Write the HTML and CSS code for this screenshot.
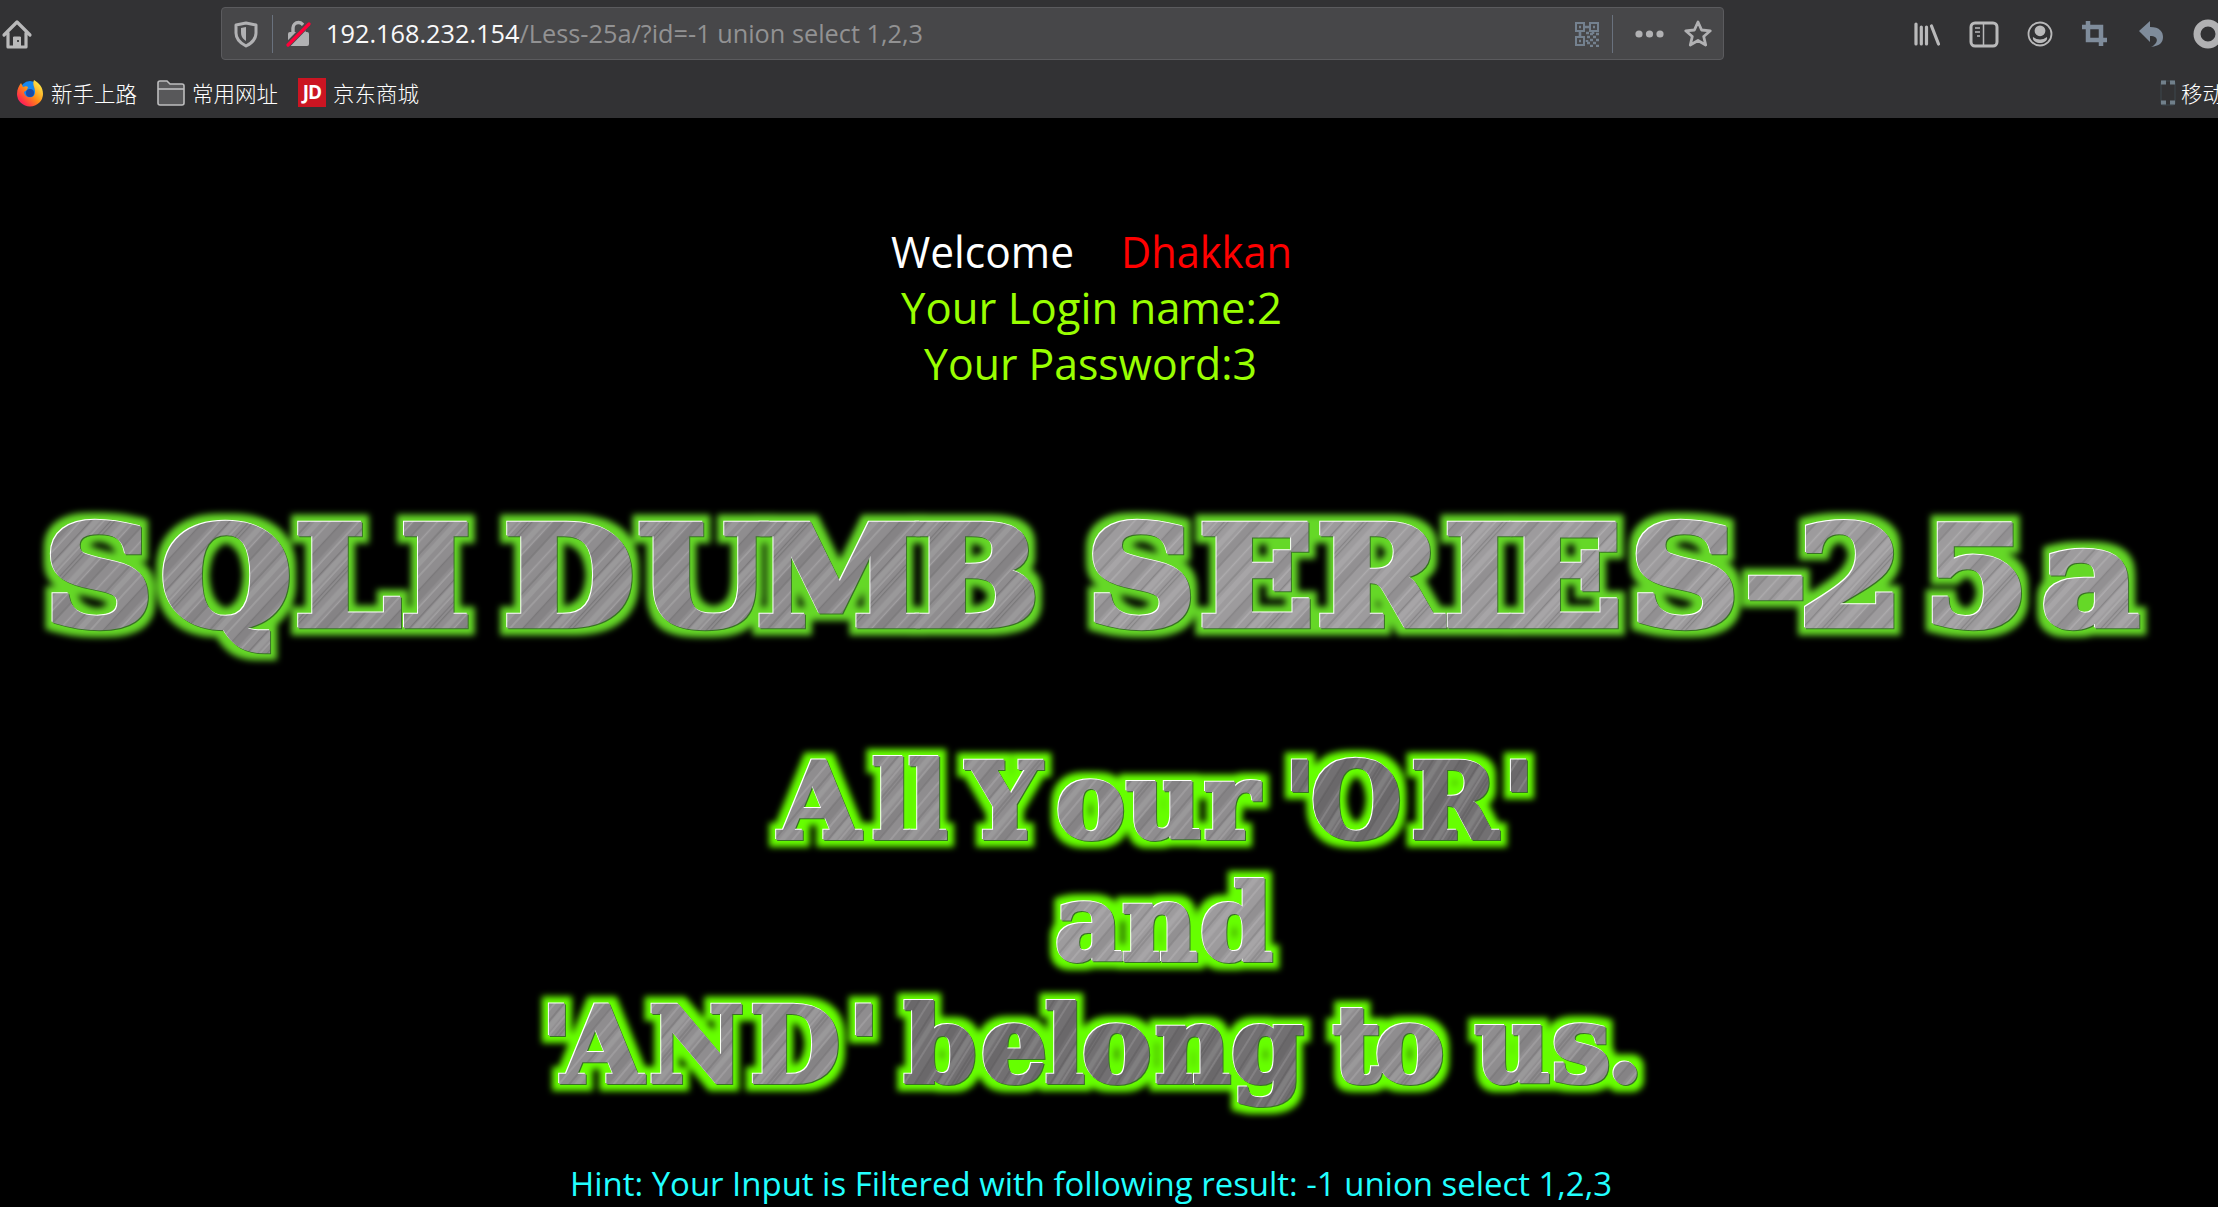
FILE: index.html
```
<!DOCTYPE html>
<html lang="zh-CN">
<head>
<meta charset="utf-8">
<title>Less-25a</title>
<link rel="stylesheet" href="styles.css">
</head>
<body>
<header class="chrome">
  <div class="toolbar">
    <svg class="home" width="32" height="32" viewBox="0 0 32 32" fill="none" stroke="#b9b9ba" stroke-width="3.2" stroke-linejoin="round" stroke-linecap="round"><path d="M3 17 16 4l13 13M7 15v14h18V15"/><path d="M12.5 29V19h7v10z" fill="#b9b9ba" stroke-width="1"/><circle cx="17" cy="23" r="1" fill="#222" stroke="none"/></svg>
    <div class="urlbar">
      <svg class="shield" width="24" height="28" viewBox="0 0 24 28"><path d="M12 3 22 5v8c0 6-4 10-10 13C6 23 2 19 2 13V5z" fill="none" stroke="#b1b1b3" stroke-width="3" stroke-linejoin="round"/><path d="M12 7v14c-4-3-5-5-5-9V8z" fill="#b1b1b3"/></svg>
      <i class="sep"></i>
      <svg class="lock" width="26" height="28" viewBox="0 0 26 28"><path d="M7 14V8a5.5 5.5 0 0 1 11 0v6" fill="none" stroke="#b1b1b3" stroke-width="3.4"/><rect x="2" y="12" width="21" height="14" rx="2" fill="#b1b1b3"/><path d="m1 25.500L23 3" stroke="#474749" stroke-width="6"/><path d="M2 25 23 4" stroke="#ff0039" stroke-width="3.2" stroke-linecap="round"/></svg>
      <svg class="url" width="620" height="50"><text x="0" y="34" textLength="597" lengthAdjust="spacingAndGlyphs"><tspan fill="#f9f9fa">192.168.232.154</tspan><tspan fill="#929293">/Less-25a/?id=-1 union select 1,2,3</tspan></text></svg>
      <svg class="qr" width="26" height="26" viewBox="0 0 26 26" fill="none" stroke="#74818f" stroke-width="2"><path d="M2 2h8v8H2zM16 2h8v8h-8zM2 16h8v8H2z"/><path d="M5 6h2M19 6h2M5 20h2M10 6h6M6 10v6M16 13h3M22 13h3M13 16h3M19 16h3M16 19h3M22 19h3M13 22h3M19 22h3M12 12h3M19 10v3M13 19v2M16 25h3M22 25h3" stroke-width="2.6"/></svg>
      <i class="sep"></i>
      <svg class="dots" width="30" height="10" viewBox="0 0 30 10" fill="#b1b1b3"><circle cx="5" cy="5" r="3.6"/><circle cx="15.500" cy="5" r="3.600"/><circle cx="26" cy="5" r="3.600"/></svg>
      <svg class="star" width="30" height="30" viewBox="0 0 30 30"><path d="m15 3 3.600 8 8.700.8-6.600 5.700 2 8.500-7.700-4.500L7.300 26l2-8.500-6.600-5.700 8.700-.8z" fill="none" stroke="#b1b1b3" stroke-width="2.800" stroke-linejoin="round"/></svg>
    </div>
    <div class="tools">
      <svg width="28" height="28" viewBox="0 0 28 28" stroke="#b9b9ba" stroke-width="3.2" stroke-linecap="round"><path d="M3 4v20M8.300 7v17M13.500 7v17M18.500 6l7 18"/></svg>
      <svg width="30" height="28" viewBox="0 0 30 28" fill="none" stroke="#b9b9ba" stroke-width="3"><rect x="2" y="3" width="26" height="23" rx="4"/><path d="M14.500 4v22" stroke-width="1.500"/><path d="M6 8h5M6 12h5M8 16h3" stroke-width="1.700"/></svg>
      <svg width="26" height="26" viewBox="0 0 26 26" fill="#b9b9ba"><circle cx="13" cy="13" r="11.500" fill="none" stroke="#b9b9ba" stroke-width="1.800"/><circle cx="13" cy="9.800" r="5.400"/><path d="M6 16q7 5 14 0c1 4-4 6-7 6s-8-2-7-6z"/></svg>
      <svg width="28" height="28" viewBox="0 0 28 28" fill="none" stroke="#7f8c9b" stroke-width="4.500"><path d="M7 1v19h19M1 7h19v19"/></svg>
      <svg width="28" height="28" viewBox="0 0 28 28" fill="#7f8c9b"><path d="M2 11 13 1v6c10 0 13 5 13 10 0 6-4 9-12 10 7-3 9-11-1-11v6z"/></svg>
      <svg width="30" height="30" viewBox="0 0 30 30"><circle cx="15" cy="15" r="11" fill="none" stroke="#b1b1b3" stroke-width="7"/></svg>
    </div>
  </div>
  <nav class="bookmarks">
    <svg class="fox" width="28" height="28" viewBox="0 0 28 28"><defs><linearGradient id="fx" x1="1" y1="0" x2="0" y2="1"><stop offset=".1" stop-color="#fff04a"/><stop offset=".5" stop-color="#ff8b16"/><stop offset=".8" stop-color="#ff2b4b"/><stop offset="1" stop-color="#d8109a"/></linearGradient></defs><circle cx="14" cy="12" r="10" fill="#1687ee"/><path d="M18 1c5 3 9 7 9 14a13 12.500 0 0 1-26 0C1 10 3 7 5 4l2 4c2-1 4-1 5 0l-1 3-3 2c1 7 11 7 11 0 0-5-3-7-1-12z" fill="url(#fx)"/><circle cx="14" cy="14" r="4" fill="#194ba8"/></svg>
    <span>新手上路</span>
    <svg class="folder" width="28" height="26" viewBox="0 0 28 26"><path d="M1 3q0-2 2-2h7l3 3h12q2 0 2 2v17q0 2-2 2H3q-2 0-2-2z" fill="#58585a" stroke="#bdbdbe" stroke-width="1.600"/><path d="M1 9h26" stroke="#bdbdbe" stroke-width="1.600"/></svg>
    <span>常用网址</span>
    <b class="jd">JD</b>
    <span>京东商城</span>
    <svg class="phone" width="16" height="26" viewBox="0 0 16 26"><rect x="1" y="1" width="14" height="24" rx="2" fill="none" stroke="#3d464d" stroke-width="1"/><path d="M1 2.500h5M10 2.500h5M1 22.500h5M10 22.500h5" stroke="#71808b" stroke-width="4"/></svg>
    <span class="mobile">移动</span>
  </nav>
</header>
<main>
  <svg class="page" width="2218" height="1089" viewBox="0 118 2218 1089">
    <defs>
      <g id="scratches" fill="none">
        <path d="M3 0v83M19 0v83M41 0v83M58 0v83M80 0v83" stroke="#fff" stroke-opacity=".16" stroke-width="1.500"/>
        <path d="M10 0v83M24 0v83M27 0v83M49 0v83M66 0v83M89 0v83" stroke="#000" stroke-opacity=".15" stroke-width="1.200"/>
        <path d="M14 0v83M35 0v83M72 0v83" stroke="#fff" stroke-opacity=".1" stroke-width="5"/>
        <path d="M45 0v83M93 0v83" stroke="#000" stroke-opacity=".07" stroke-width="7"/>
      </g>
      <pattern id="brush" width="97" height="83" patternUnits="userSpaceOnUse" patternTransform="rotate(40)">
        <rect width="97" height="83" fill="#8f8d8f"/><use href="#scratches"/>
      </pattern>
      <pattern id="brush-dark" width="97" height="83" patternUnits="userSpaceOnUse" patternTransform="rotate(32)">
        <rect width="97" height="83" fill="#727072"/><use href="#scratches"/>
      </pattern>
      <pattern id="brush-light" width="97" height="83" patternUnits="userSpaceOnUse" patternTransform="rotate(40)">
        <rect width="97" height="83" fill="#9d9b9d"/><use href="#scratches"/>
      </pattern>
      <filter id="glow" filterUnits="userSpaceOnUse" x="0" y="450" width="2218" height="740" color-interpolation-filters="sRGB">
        <feMorphology in="SourceAlpha" operator="dilate" radius="7" result="fat"/>
        <feGaussianBlur in="fat" stdDeviation="3" result="soft"/>
        <feFlood flood-color="#65d827"/><feComposite in2="soft" operator="in" result="green"/>
        <feOffset in="SourceAlpha" dx="-1.300" dy="-1.300" result="up"/>
        <feFlood flood-color="#fff"/><feComposite in2="up" operator="in" result="light"/>
        <feOffset in="SourceAlpha" dx="1.200" dy="1.200" result="down"/>
        <feFlood flood-color="#397225"/><feComposite in2="down" operator="in" result="dark"/>
        <feMerge><feMergeNode in="green"/><feMergeNode in="dark"/><feMergeNode in="light"/><feMergeNode in="SourceGraphic"/></feMerge>
      </filter>
      <filter id="neon" filterUnits="userSpaceOnUse" x="400" y="700" width="1400" height="490" color-interpolation-filters="sRGB">
        <feMorphology in="SourceAlpha" operator="dilate" radius="7" result="fat"/>
        <feGaussianBlur in="fat" stdDeviation="3" result="soft"/>
        <feFlood flood-color="#66ff00"/><feComposite in2="soft" operator="in" result="green"/>
        <feOffset in="SourceAlpha" dx="-1.200" dy="-1.200" result="up"/>
        <feFlood flood-color="#fff"/><feComposite in2="up" operator="in" result="light"/>
        <feOffset in="SourceAlpha" dx="1" dy="1" result="down"/>
        <feFlood flood-color="#397225"/><feComposite in2="down" operator="in" result="dark"/>
        <feMerge><feMergeNode in="green"/><feMergeNode in="dark"/><feMergeNode in="light"/><feMergeNode in="SourceGraphic"/></feMerge>
      </filter>
    </defs>
    <g class="plain">
      <text x="891" y="268" textLength="183" lengthAdjust="spacingAndGlyphs" fill="#fff">Welcome</text>
      <text x="1121" y="268" textLength="171" lengthAdjust="spacingAndGlyphs" fill="#f00">Dhakkan</text>
      <text x="901" y="324" textLength="381" lengthAdjust="spacingAndGlyphs" fill="#9f0">Your Login name:2</text>
      <text x="924" y="380" textLength="333" lengthAdjust="spacingAndGlyphs" fill="#9f0">Your Password:3</text>
      <text class="hint" x="570" y="1196" textLength="1042" lengthAdjust="spacingAndGlyphs" fill="#2ff">Hint: Your Input is Filtered with following result: -1 union select 1,2,3</text>
    </g>
    <g filter="url(#glow)">
      <g class="title" transform="scale(1.1 1)">
        <text y="625" x="40.400 146 268 364">SQLI</text>
        <text y="625" x="458 580 688 829">DUMB</text>
        <text class="light" y="625" x="988 1090 1197 1313 1370 1482 1586 1635 1749 1856">SERIES-25a</text>
      </g>
    </g>
    <g class="sub" filter="url(#neon)">
      <text y="838" x="779 872 908">All</text>
      <text y="838" x="967 1056 1126 1204">Your</text>
      <text class="dark" y="838" x="1284 1311 1411 1503">'OR'</text>
      <text class="light" y="960" x="1055 1122 1200">and</text>
      <text y="1082" x="541 562 649 750 848">'AND'</text>
      <text class="dark" y="1082" x="904 981 1045 1082 1155 1231">belong</text>
      <text y="1082" x="1333 1375">to</text>
      <text y="1082" x="1475 1552 1607">us.</text>
    </g>
  </svg>
</main>
</body>
</html>
```
FILE: styles.css
```
* { box-sizing: border-box; }
body { margin: 0; width: 2218px; height: 1207px; overflow: hidden; background: #000; font-family: "Noto Sans", "Noto Sans CJK SC", sans-serif; }
svg { display: block; flex: none; }
.chrome { height: 118px; background: #323234; overflow: hidden; }
.toolbar { height: 67px; display: flex; align-items: center; }
.home { margin-left: 1px; }
.urlbar { flex: none; margin-left: 188px; width: 1503px; height: 53px; border: 1px solid #5b5b5e; border-radius: 4px; background: #474749; display: flex; align-items: center; }
.shield { margin-left: 12px; }
.sep { flex: none; width: 1px; height: 38px; background: #69717d; margin-left: 14px; }
.lock { margin-left: 13px; }
.url { margin-left: 14px; font-family: "Open Sans", sans-serif; font-size: 25px; }
.qr { margin-left: 628px; }
.qr + .sep { margin-left: 12px; }
.dots { margin-left: 21px; }
.star { margin-left: 19px; }
.tools { flex: none; margin-left: 189px; display: flex; align-items: center; gap: 28px; }
.bookmarks { height: 51px; display: flex; align-items: center; color: #fff; font-size: 21.500px; line-height: 30px; white-space: nowrap; font-family: "Noto Sans CJK SC", sans-serif; font-weight: 300; }
.bookmarks span { width: 86px; flex: none; margin-left: 7px; }
.fox { margin-left: 16px; }
.folder { margin-left: 20px; }
.jd { flex: none; width: 28px; height: 29px; margin-left: 20px; background: #cb1522; font: bold 19px/29px "Open Sans", sans-serif; text-align: center; letter-spacing: -1px; }
.phone { margin-left: 1741px; }
.bookmarks .mobile { width: auto; margin-left: 5px; }
.plain { font-family: "Open Sans", sans-serif; font-size: 43px; }
.hint { font-size: 32.500px; }
.title, .sub { font-family: "DejaVu Serif", serif; font-weight: bold; fill: url(#brush); stroke: url(#brush); stroke-linejoin: miter; }
.title { font-size: 137px; stroke-width: 6.500px; }
.sub { font-size: 104px; stroke-width: 4px; }
.dark { fill: url(#brush-dark); stroke: url(#brush-dark); }
.light { fill: url(#brush-light); stroke: url(#brush-light); }
```
